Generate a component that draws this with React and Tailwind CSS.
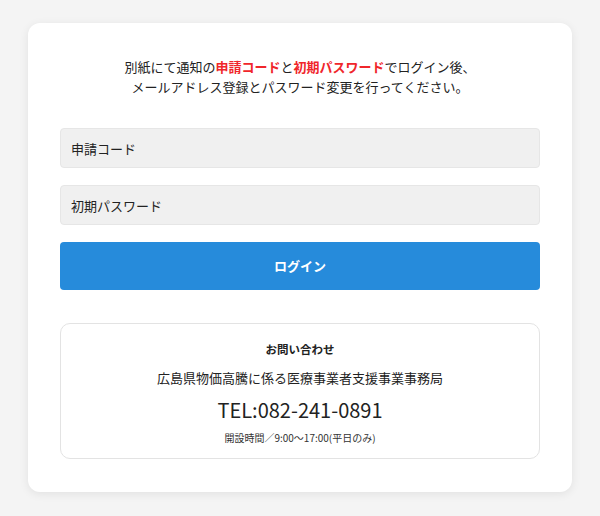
import { useState } from "react";

const font = { fontFamily: '"Noto Sans CJK JP", "Noto Sans", sans-serif' };

const App = () => {
    const [code, setCode] = useState("");
    const [password, setPassword] = useState("");

    return (
        <div className="min-h-screen bg-[#f4f4f4] pt-[23px] px-[28px]" style={font}>
            <div className="w-[544px] bg-white rounded-xl shadow-[0_2px_10px_rgba(0,0,0,0.08)] pt-[34px] pb-[33px] px-8">
                <p className="text-center text-[13px] leading-[20px] text-[#222]">
                    別紙にて通知の<span className="text-[#f0262b] font-bold">申請コード</span>と<span className="text-[#f0262b] font-bold">初期パスワード</span>でログイン後、
                    <br />
                    メールアドレス登録とパスワード変更を行ってください。
                </p>

                <form className="mt-[31px] flex flex-col" onSubmit={e => e.preventDefault()}>
                    <input
                        type="text"
                        value={code}
                        onChange={e => setCode(e.target.value)}
                        placeholder="申請コード"
                        className="h-[40px] w-full bg-[#f0f0f0] border border-[#e6e6e6] rounded px-[10px] text-[13px] text-[#222] placeholder:text-[#222] outline-none"
                    />
                    <input
                        type="password"
                        value={password}
                        onChange={e => setPassword(e.target.value)}
                        placeholder="初期パスワード"
                        className="mt-[17px] h-[40px] w-full bg-[#f0f0f0] border border-[#e6e6e6] rounded px-[10px] text-[13px] text-[#222] placeholder:text-[#222] outline-none"
                    />
                    <button
                        type="submit"
                        className="mt-[17px] h-[48px] w-full bg-[#268bdb] rounded text-white font-bold text-[13px]"
                    >
                        ログイン
                    </button>
                </form>

                <div className="mt-[33px] border border-[#e3e3e3] rounded-[10px] pt-[16px] pb-[13px] text-center text-[#222]">
                    <h2 className="text-[11.5px] leading-[18px] font-bold">お問い合わせ</h2>
                    <p className="mt-[10px] text-[13px] leading-[20px]">広島県物価高騰に係る医療事業者支援事業事務局</p>
                    <p className="mt-[8px] text-[20px] leading-[28px]">TEL:082-241-0891</p>
                    <p className="mt-[7px] text-[10px] leading-[14px] text-[#333]">開設時間／9:00〜17:00(平日のみ)</p>
                </div>
            </div>
        </div>
    );
};

export default App;
